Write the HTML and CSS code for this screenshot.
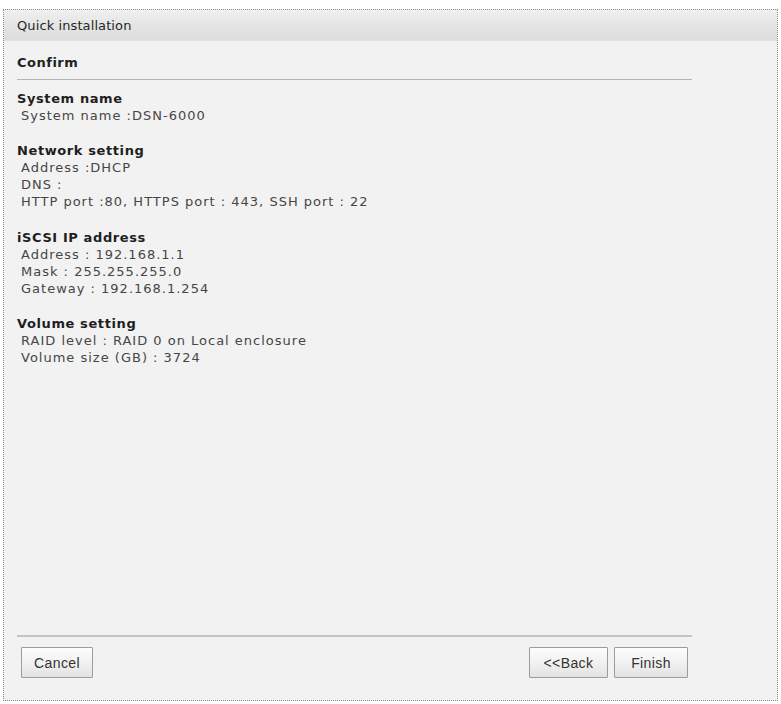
FILE: index.html
```html
<!DOCTYPE html>
<html>
<head>
<meta charset="utf-8">
<title>Quick installation</title>
<link rel="stylesheet" href="styles.css">
</head>
<body>
<div class="panel">
  <div class="panel-header">Quick installation</div>
  <div class="panel-body">
    <div class="content">
      <div class="step-title">Confirm</div>
      <div class="section">
        <div class="sec-head">System name</div>
        <div class="sec-line">System name :DSN-6000</div>
      </div>
      <div class="section">
        <div class="sec-head">Network setting</div>
        <div class="sec-line">Address :DHCP</div>
        <div class="sec-line">DNS :</div>
        <div class="sec-line">HTTP port :80, HTTPS port : 443, SSH port : 22</div>
      </div>
      <div class="section">
        <div class="sec-head">iSCSI IP address</div>
        <div class="sec-line">Address : 192.168.1.1</div>
        <div class="sec-line">Mask : 255.255.255.0</div>
        <div class="sec-line">Gateway : 192.168.1.254</div>
      </div>
      <div class="section">
        <div class="sec-head">Volume setting</div>
        <div class="sec-line">RAID level : RAID 0 on Local enclosure</div>
        <div class="sec-line">Volume size (GB) : 3724</div>
      </div>
    </div>
    <div class="footer">
      <button class="btn btn-cancel">Cancel</button>
      <div class="footer-right">
        <button class="btn btn-back">&lt;&lt;Back</button>
        <button class="btn btn-finish">Finish</button>
      </div>
    </div>
  </div>
</div>
</body>
</html>
```

FILE: styles.css
```css
html, body {
  margin: 0;
  padding: 0;
  background: #ffffff;
}

body {
  font-family: "DejaVu Sans", Verdana, sans-serif;
  color: #333;
}

.panel {
  margin: 9px 3px 0 3px;
  height: 692px;
  border: 1px dotted #8a8a8a;
  box-sizing: border-box;
  background: #f2f2f2;
  display: flex;
  flex-direction: column;
}

.panel-header {
  height: 30px;
  line-height: 31px;
  padding-left: 13px;
  font-size: 13px;
  color: #262626;
  background: linear-gradient(to bottom, #efefef 0%, #e4e4e4 55%, #dcdcdc 100%);
  border-bottom: 1px solid #e2e2e2;
  letter-spacing: 0.1px;
}

.panel-body {
  flex: 1;
  display: flex;
  flex-direction: column;
  padding: 0 85px 0 13px;
}

.content {
  flex: 1;
}

.step-title {
  font-weight: bold;
  font-size: 13px;
  letter-spacing: 0.5px;
  color: #222;
  padding-top: 14px;
  padding-bottom: 9px;
  line-height: 15px;
  border-bottom: 1px solid #b4b4b4;
}

.section {
  margin-top: 9.5px;
}

.section + .section {
  margin-top: 18.5px;
}

.sec-head {
  font-weight: bold;
  font-size: 13px;
  letter-spacing: 0.6px;
  line-height: 17px;
  color: #1e1e1e;
}

.sec-line {
  font-size: 13px;
  letter-spacing: 1px;
  line-height: 17px;
  color: #464646;
  padding-left: 4px;
}

.footer {
  border-top: 2px solid #c4c4c4;
  margin-bottom: 22px;
  padding: 10px 4px 0 4px;
  display: flex;
  justify-content: space-between;
  align-items: center;
}

.footer-right {
  display: flex;
  gap: 6px;
}

.btn {
  font-family: "Liberation Sans", Arial, sans-serif;
  font-size: 14px;
  letter-spacing: 0.4px;
  color: #333;
  height: 31px;
  border: 1px solid #9c9c9c;
  border-radius: 1px;
  background: linear-gradient(to bottom, #fdfdfd 0%, #f0f0f0 55%, #e2e2e2 100%);
  padding: 0;
  margin: 0;
}

.btn-cancel {
  width: 72px;
}

.btn-back {
  width: 79px;
}

.btn-finish {
  width: 74px;
}
```
